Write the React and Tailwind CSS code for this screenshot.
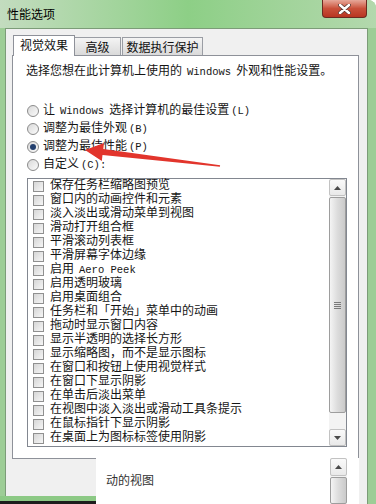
import React from 'react';

const FONT = { fontFamily: '"Liberation Mono", "Noto Sans CJK SC", sans-serif' };
const UI = { fontFamily: '"Noto Sans CJK SC", "Noto Sans", sans-serif' };

const items = [
  ['保存任务栏缩略图预览'],
  ['窗口内的动画控件和元素'],
  ['淡入淡出或滑动菜单到视图'],
  ['滑动打开组合框'],
  ['平滑滚动列表框'],
  ['平滑屏幕字体边缘'],
  ['启用', 'Aero Peek'],
  ['启用透明玻璃'],
  ['启用桌面组合'],
  ['任务栏和「开始」菜单中的动画'],
  ['拖动时显示窗口内容'],
  ['显示半透明的选择长方形'],
  ['显示缩略图，而不是显示图标'],
  ['在窗口和按钮上使用视觉样式'],
  ['在窗口下显示阴影'],
  ['在单击后淡出菜单'],
  ['在视图中淡入淡出或滑动工具条提示'],
  ['在鼠标指针下显示阴影'],
  ['在桌面上为图标标签使用阴影'],
];

const Latin = ({ children, tight }) => (
  <span
    className={`text-[10.5px] ${tight ? 'ml-[2px]' : 'mx-[5px]'}`}
    style={{ fontFamily: '"Liberation Mono", monospace' }}
  >
    {children}
  </span>
);

const Radio = ({ checked, children }) => (
  <div className="h-[18px] flex items-center">
    <span className="w-[12px] h-[12px] rounded-full border border-[#8b8b8b] bg-linear-to-br from-[#d9d9d9] to-[#fbfbfb] flex items-center justify-center">
      {checked && <span className="w-[6px] h-[6px] rounded-full bg-[#23406f]" />}
    </span>
    <span className="ml-[4px] text-[12px] leading-[14px] text-[#151515]" style={FONT}>
      {children}
    </span>
  </div>
);

const Arrow = ({ up }) => (
  <svg width="7" height="4" viewBox="0 0 7 4">
    <path d={up ? 'M0 4 L3.5 0 L7 4 Z' : 'M0 0 L3.5 4 L7 0 Z'} fill="#4a4a4a" />
  </svg>
);

const ScrollButton = ({ up, className = '' }) => (
  <div className={`h-[17px] border border-[#c2c2c2] rounded-[2px] bg-linear-to-b from-[#fafafa] to-[#e9e9e9] flex items-center justify-center ${className}`}>
    <Arrow up={up} />
  </div>
);

const Thumb = ({ className = '', grip }) => (
  <div className={`border border-[#9d9d9d] rounded-[2px] bg-linear-to-r from-[#f4f4f4] via-[#dcdcdc] to-[#cacaca] flex items-center justify-center ${className}`}>
    {grip && (
      <div className="flex flex-col gap-[1px]">
        <span className="w-[7px] h-[1px] bg-[#7a7a7a]" />
        <span className="w-[7px] h-[1px] bg-[#7a7a7a]" />
        <span className="w-[7px] h-[1px] bg-[#7a7a7a]" />
        <span className="w-[7px] h-[1px] bg-[#7a7a7a]" />
      </div>
    )}
  </div>
);

export default function App() {
  return (
    <div className="w-[376px] h-[504px] relative overflow-hidden rounded-tr-[8px] bg-[#9dcd96] flex flex-col" style={UI}>
      {/* title bar */}
      <div className="h-[28px] flex justify-between bg-linear-to-r from-[#c3dcbf] via-[#8dcf86] to-[#b3d8ad]">
        <span className="ml-[7px] mt-[6px] text-[12px] leading-[16px] text-black">性能选项</span>
        <div className="mr-[9px] w-[45px] h-[18px] border border-t-0 border-[#6b2a20] rounded-b-[4px] bg-linear-to-b from-[#e6a89a] via-[#c9503a] to-[#b83521] flex items-center justify-center">
          <svg width="13" height="10" viewBox="0 0 13 10">
            <path d="M2 1 L11 9 M11 1 L2 9" stroke="#5a3a34" strokeWidth="4" strokeLinecap="round" />
            <path d="M2 1 L11 9 M11 1 L2 9" stroke="#ffffff" strokeWidth="2.4" strokeLinecap="round" />
          </svg>
        </div>
      </div>

      {/* client area */}
      <div className="flex-1 ml-[5px] mr-[8px] bg-[#f0f0f0] border border-b-0 border-[#7c9c78] flex flex-col">
        {/* tabs */}
        <div className="flex items-end h-[20px] mt-[6px] ml-[7px] text-[12px] text-[#111]">
          <div className="relative z-10 w-[62px] h-[21px] -mb-[1px] bg-white border border-b-0 border-[#8e9199] flex items-start justify-center leading-[18px]">
            视觉效果
          </div>
          <div className="w-[46px] h-[18px] border border-b-0 border-l-0 border-[#9a9da4] bg-linear-to-b from-[#f4f4f4] to-[#dadada] flex items-center justify-center">
            高级
          </div>
          <div className="ml-[1px] w-[81px] h-[18px] border border-b-0 border-[#9a9da4] bg-linear-to-b from-[#f4f4f4] to-[#dadada] flex items-center justify-center">
            数据执行保护
          </div>
        </div>

        {/* panel */}
        <div className="ml-[6px] w-[347px] h-[403px] bg-white border border-b-0 border-[#8e9199] flex flex-col">
          <p className="mt-[8px] ml-[13px] text-[12px] leading-[16px] text-[#151515]" style={FONT}>
            选择您想在此计算机上使用的<Latin>Windows</Latin>外观和性能设置。
          </p>

          <div className="mt-[22px] ml-[14px] flex flex-col">
            <Radio>
              让<Latin>Windows</Latin>选择计算机的最佳设置<Latin tight>(L)</Latin>
            </Radio>
            <Radio>
              调整为最佳外观<Latin tight>(B)</Latin>
            </Radio>
            <Radio checked>
              调整为最佳性能<Latin tight>(P)</Latin>
            </Radio>
            <Radio>
              自定义<Latin tight>(C):</Latin>
            </Radio>
          </div>

          {/* list box */}
          <div className="mt-[4px] ml-[14px] w-[320px] h-[269px] border border-[#828790] flex">
            <div className="flex-1 flex flex-col">
              {items.map((it, i) => (
                <div key={i} className="h-[14px] flex items-center">
                  <span className="ml-[5px] w-[11px] h-[11px] border border-[#909090] bg-linear-to-br from-[#d6d6d6] to-[#f6f6f6]" />
                  <span className="ml-[6px] text-[12px] leading-[14px] text-[#151515] whitespace-nowrap" style={FONT}>
                    {it[0]}
                    {it[1] && <Latin>{it[1]}</Latin>}
                  </span>
                </div>
              ))}
            </div>
            <div className="w-[17px] bg-[#f3f3f3] flex flex-col">
              <ScrollButton up />
              <div className="flex-1 pt-[1px]">
                <Thumb grip className="h-[216px]" />
              </div>
              <ScrollButton />
            </div>
          </div>
        </div>

        {/* bottom strip with overlapping pasted region */}
        <div className="flex-1 flex">
          <div className="w-[90px] flex flex-col">
            <div className="flex-1 ml-[6px] border-t border-[#8e9199]" />
            <div className="h-[5px] -ml-[6px] bg-[#8cc985]" />
            <div className="h-[3px] -ml-[6px] bg-[#1d1d1d]" />
          </div>
          <div className="w-[263px] bg-white flex">
            <span className="mt-[14px] ml-[10px] text-[12px] leading-[16px] h-[16px] text-[#333]">动的视图</span>
            <div className="ml-auto mr-[12px] w-[17px] bg-[#f3f3f3] flex flex-col">
              <ScrollButton up className="h-[18px]" />
              <Thumb className="flex-1 mt-[1px]" />
            </div>
          </div>
        </div>
      </div>

      {/* red annotation arrow */}
      <svg className="absolute left-0 top-0 pointer-events-none" width="376" height="504">
        <polygon
          points="85,150 104,143 103.3,149.1 220.1,165.2 219.9,166.8 102.5,155.1 101.8,161"
          fill="#e2352c"
        />
      </svg>
    </div>
  );
}
